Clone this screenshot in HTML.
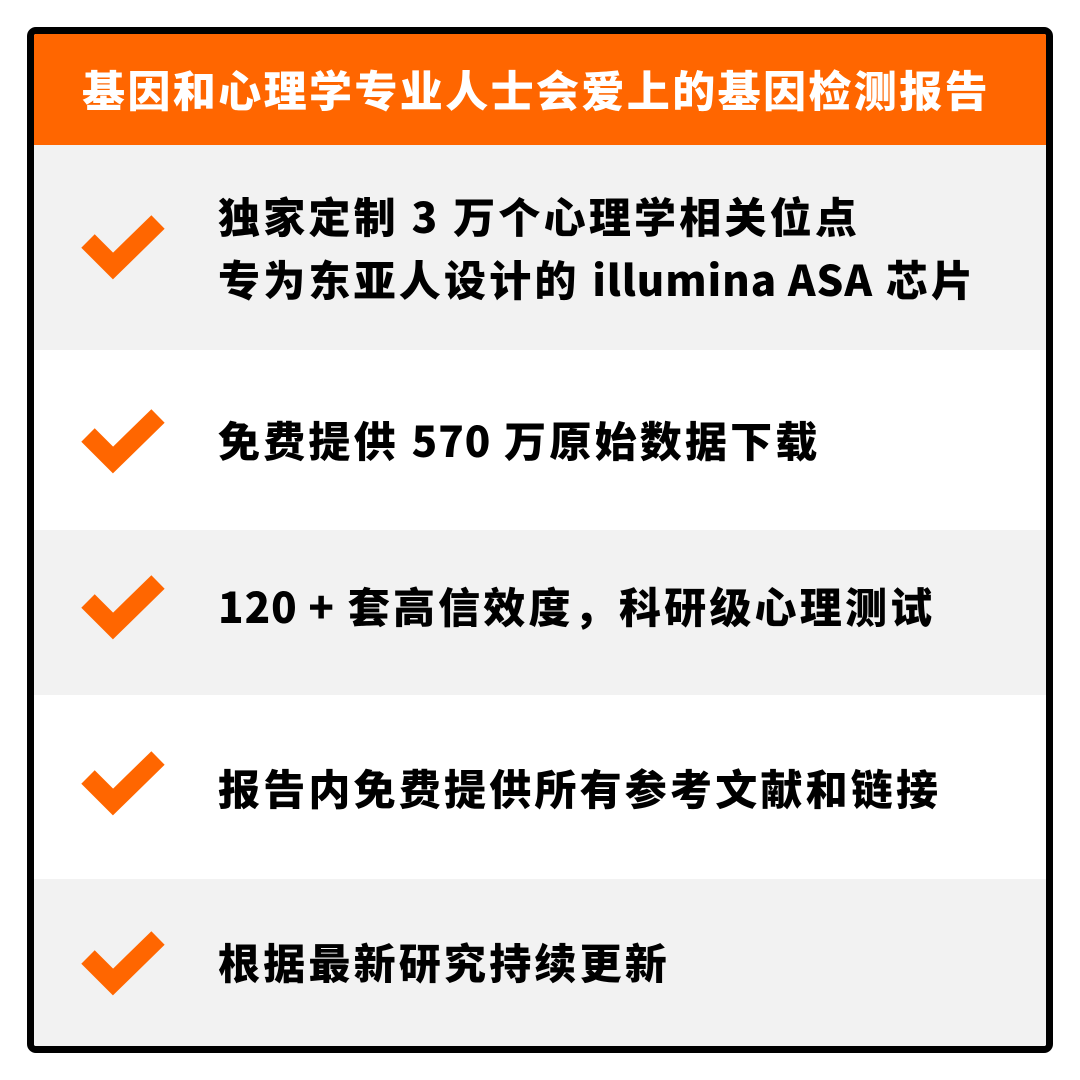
<!DOCTYPE html>
<html><head><meta charset="utf-8"><style>
*{margin:0;padding:0;box-sizing:border-box}
body{width:1080px;height:1080px;background:#fff;position:relative;overflow:hidden;font-family:"Liberation Sans","Noto Sans CJK SC",sans-serif}
.box{position:absolute;left:27px;top:27px;width:1026px;height:1026px;border:7px solid #000;border-radius:9px;overflow:hidden;background:#fff}
.hd{position:absolute;left:0;top:0;width:100%;height:111px;background:#ff6600;color:#fff;font-weight:900;font-size:43px;letter-spacing:2.4px;line-height:111px;text-align:center;font-family:"Noto Sans CJK SC",sans-serif;text-indent:-8px}
.row{position:absolute;left:0;width:100%}
.g{background:#f2f2f2}
.t{position:absolute;left:184px;font-family:"Noto Sans CJK SC",sans-serif;font-weight:900;font-size:42px;letter-spacing:3.2px;color:#000;line-height:63px;white-space:nowrap}
.l{letter-spacing:1px}
svg{position:absolute;left:0;top:0}
</style></head><body>
<div class="box">
<div class="hd">基因和心理学专业人士会爱上的基因检测报告</div>
<div class="row g" style="top:111px;height:205px"></div>
<div class="row" style="top:316px;height:180px"></div>
<div class="row g" style="top:496px;height:165px"></div>
<div class="row" style="top:661px;height:184px"></div>
<div class="row g" style="top:845px;height:180px"></div>
<div class="t" style="top:150px">独家定制 3 万个心理学相关位点<br>专为东亚人设计的 <span class="l">illumina ASA</span> 芯片</div>
<div class="t" style="top:374px">免费提供 <span class="l">570</span> 万原始数据下载</div>
<div class="t" style="top:540px"><span class="l">120 +</span> 套高信效度，科研级心理测试</div>
<div class="t" style="top:722px">报告内免费提供所有参考文献和链接</div>
<div class="t" style="top:896px">根据最新研究持续更新</div>
</div>
<svg width="1080" height="1080">
<g fill="none" stroke="#ff6600" stroke-width="19" stroke-linejoin="miter">
<polyline points="88,241 113,266 158,222"/>
<polyline points="88,435 113,460 158,416"/>
<polyline points="88,601 113,626 158,582"/>
<polyline points="88,777 113,802 158,758"/>
<polyline points="88,957 113,982 158,938"/>
</g>
</svg>
</body></html>
